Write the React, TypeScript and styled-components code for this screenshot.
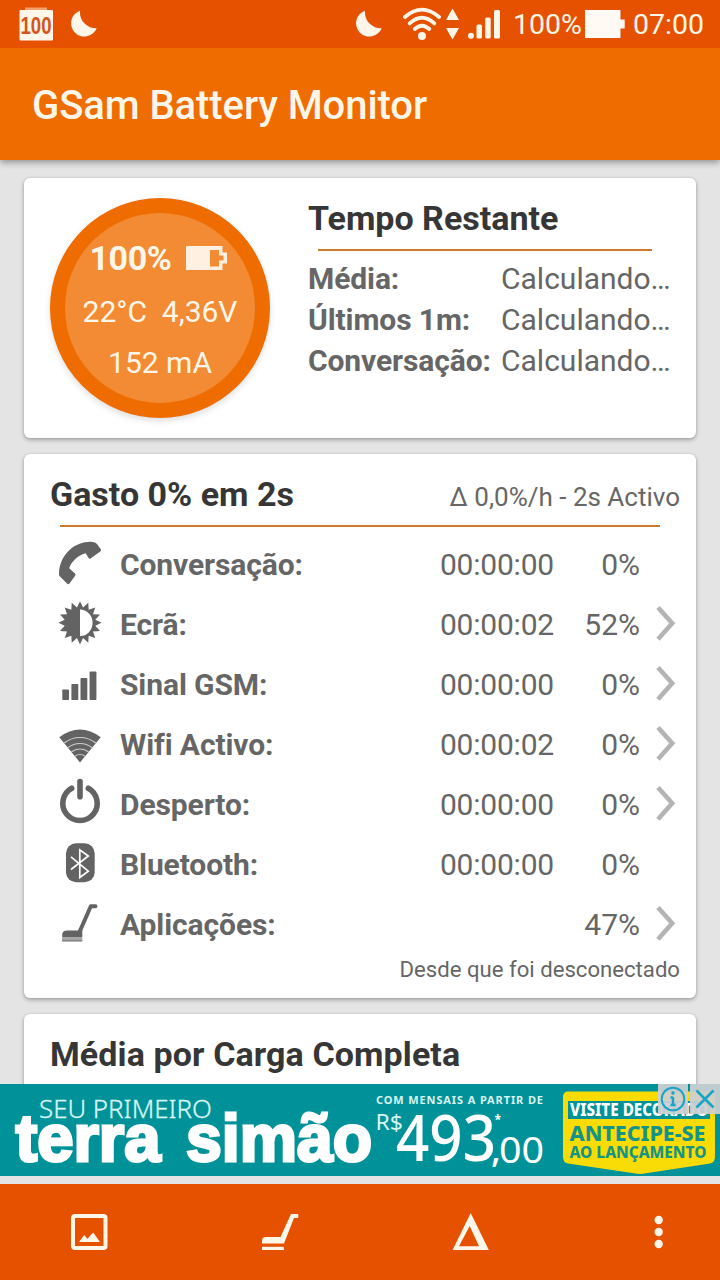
import React from 'react';
import styled, { createGlobalStyle } from 'styled-components';

const colors = {
  statusBar: '#e65100',
  appBar: '#ef6c00',
  page: '#e4e4e4',
  heading: '#363636',
  text: '#666666',
  icon: '#636363',
  rule: '#cc7a2c',
  ink: '#fff6ea',
  teal: '#009298',
  yellow: '#f9dc05',
};

const GlobalStyle = createGlobalStyle`
  * { box-sizing: border-box; }
  body { margin: 0; }
  svg { display: block; flex: none; }
`;

const Screen = styled.div`
  width: 720px;
  height: 1280px;
  display: flex;
  flex-direction: column;
  overflow: hidden;
  background: ${colors.page};
  font-family: Roboto, 'Noto Sans', sans-serif;
  color: ${colors.text};
`;

const StatusBar = styled.header`
  flex: none;
  height: 48px;
  padding: 0 16px 0 18px;
  display: flex;
  align-items: center;
  justify-content: space-between;
  background: ${colors.statusBar};
  color: ${colors.ink};
`;

const StatusGroup = styled.div`
  display: flex;
  align-items: center;
  height: 48px;
`;

const StatusText = styled.span<{ $left: number; $width: number }>`
  margin-left: ${(p) => p.$left}px;
  width: ${(p) => p.$width}px;
  font-size: 28.5px;
  line-height: 48px;
  padding-top: 2px;
  white-space: nowrap;
`;

const Gap = styled.span<{ $w: number }>`
  width: ${(p) => p.$w}px;
`;

const AppBar = styled.div`
  flex: none;
  height: 112px;
  padding: 4px 32px 0;
  display: flex;
  align-items: center;
  background: ${colors.appBar};
  box-shadow: 0 2px 7px rgba(0, 0, 0, 0.4);
  clip-path: inset(0 0 -12px 0);
  z-index: 1;
`;

const Title = styled.h1`
  margin: 0;
  font-size: 40px;
  font-weight: 500;
  line-height: 48px;
  letter-spacing: -0.08px;
  color: ${colors.ink};
`;

const Content = styled.main`
  flex: 1;
  min-height: 0;
  overflow: hidden;
  padding: 18px 24px 0;
  display: flex;
  flex-direction: column;
  gap: 16px;
`;

const Card = styled.section<{ $height: number }>`
  flex: none;
  height: ${(p) => p.$height}px;
  background: #fff;
  border-radius: 6px;
  box-shadow: 0 2px 4px rgba(0, 0, 0, 0.28), 0 0 2px rgba(0, 0, 0, 0.16);
`;

const SummaryCard = styled(Card)`
  display: flex;
  align-items: flex-start;
  padding: 20px 24px 0 26px;
`;

const Gauge = styled.div`
  flex: none;
  width: 220px;
  height: 220px;
  border-radius: 50%;
  border: 15px solid ${colors.appBar};
  background: #f28b33;
  color: ${colors.ink};
  box-shadow: 0 3px 6px rgba(0, 0, 0, 0.13);
  padding-top: 19px;
  display: flex;
  flex-direction: column;
  align-items: center;
`;

const GaugeLine = styled.div<{ $h: number }>`
  height: ${(p) => p.$h}px;
  line-height: ${(p) => p.$h}px;
  font-size: 30px;
  white-space: pre;
  display: flex;
  align-items: center;
`;

const GaugePercent = styled.strong`
  font-size: 34px;
  letter-spacing: -0.4px;
  margin: 0 14px 0 -4px;
`;

const Remaining = styled.div`
  margin-left: 38px;
  width: 364px;
`;

const Heading = styled.h2`
  margin: 0;
  font-size: 34px;
  font-weight: 700;
  line-height: 40px;
  color: ${colors.heading};
  white-space: nowrap;
`;

const Rule = styled.hr<{ $width: number; $top?: number }>`
  margin: ${(p) => p.$top ?? 0}px 0 0 10px;
  border: 0;
  height: 2px;
  width: ${(p) => p.$width}px;
  background: ${colors.rule};
`;

const Estimates = styled.dl`
  margin: 8px 0 0;
  display: grid;
  grid-template-columns: 193px 1fr;
  grid-auto-rows: 40.75px;
  line-height: 40.75px;
  font-size: 30px;
  white-space: nowrap;
`;

const EstimateLabel = styled.dt`
  font-weight: 700;
  letter-spacing: -0.1px;
`;

const EstimateValue = styled.dd`
  margin: 0;
`;

const UsageCard = styled(Card)`
  padding: 20px 16px 0 26px;
`;

const UsageHeader = styled.div`
  display: flex;
  justify-content: space-between;
  align-items: baseline;
  height: 51px;
`;

const UsageNote = styled.span`
  font-size: 26px;
  white-space: nowrap;
`;

const UsageList = styled.div`
  padding-top: 7px;
`;

const UsageRow = styled.div`
  display: grid;
  grid-template-columns: 70px 264px 170px 86px 40px;
  grid-template-rows: 60px;
  align-items: center;
  line-height: 58px;
  font-size: 30px;
  white-space: nowrap;
`;

const UsageLabel = styled.span`
  font-weight: 700;
  letter-spacing: -0.1px;
  padding-top: 2px;
`;

const UsageTime = styled.span`
  text-align: right;
  letter-spacing: -0.2px;
  padding-top: 2px;
`;

const UsagePercent = styled.span`
  text-align: right;
  padding-top: 2px;
`;

const Footnote = styled.p`
  margin: 0;
  font-size: 22.15px;
  line-height: 30px;
  text-align: right;
`;

const AverageCard = styled(Card)`
  padding: 20px 26px 0;
`;

const AverageHeading = styled(Heading)`
  letter-spacing: 0.1px;
`;

const AdSlot = styled.aside`
  flex: none;
  position: relative;
  height: 100px;
`;

const AdControls = styled.div`
  position: absolute;
  top: 0;
  right: 0;
  display: flex;
  gap: 2px;
`;

const AdButton = styled.span`
  width: 30px;
  height: 30px;
  display: flex;
  align-items: center;
  justify-content: center;
  background: rgba(204, 208, 211, 0.93);
`;

const BottomBar = styled.nav`
  flex: none;
  height: 96px;
  padding: 0 41px 0 65px;
  display: flex;
  align-items: center;
  justify-content: space-between;
  background: ${colors.statusBar};
`;

const BatteryLevelBadge = () => (
  <svg width="36" height="36" viewBox="18 6 36 36">
    <rect x="25" y="7.5" width="22" height="4" fill="#f3a071" />
    <rect x="19.5" y="10" width="33.5" height="30.5" rx="1" fill={colors.ink} />
    <text
      x="20.5"
      y="33.5"
      fontFamily="Liberation Sans"
      fontSize="24"
      fontWeight="700"
      textLength="31"
      lengthAdjust="spacingAndGlyphs"
      fill="#d4551c"
    >
      100
    </text>
  </svg>
);

const Moon = () => (
  <svg width="28" height="28" viewBox="0 0 28 28">
    <path d="M10 .7 A13.3 13.3 0 1 0 26.7 18.3 A16 16 0 0 1 10 .7Z" fill={colors.ink} />
  </svg>
);

const StatusWifi = () => (
  <svg width="38" height="34" viewBox="403 7 38 34">
    <g fill="none" stroke={colors.ink} strokeWidth="3.8" strokeLinecap="round">
      <path d="M404.9 17 Q422 2.3 439.1 17" />
      <path d="M409.7 23.4 Q422 12.2 434.3 23.4" />
      <path d="M414.7 29 Q422 22.5 429.3 29" />
    </g>
    <circle cx="422" cy="36" r="4" fill={colors.ink} />
  </svg>
);

const DataArrows = () => (
  <svg width="13" height="32" viewBox="446.5 8 13 32">
    <path d="M453 8.5 L459.5 20 H446.5Z M446.5 28 H459.5 L453 39.5Z" fill={colors.ink} />
  </svg>
);

const StatusSignal = () => (
  <svg width="32" height="30" viewBox="468 9 32 30" fill={colors.ink}>
    <circle cx="471" cy="35.7" r="3" />
    <rect x="476.5" y="24.5" width="5.5" height="14" rx="1.5" />
    <rect x="485.2" y="17.5" width="5.5" height="21" rx="1.5" />
    <rect x="494" y="10" width="6" height="28.5" rx="1.5" />
  </svg>
);

const StatusBattery = () => (
  <svg width="40" height="28" viewBox="585 10 40 28">
    <path d="M585 10 H620.5 V19.5 H624.7 V28.5 H620.5 V38 H585Z" fill="#fffaf4" />
  </svg>
);

const GaugeBattery = () => (
  <svg width="41" height="26" viewBox="0 0 41 26">
    <path
      fillRule="evenodd"
      d="M0 0 H36.5 V6.5 H41 V17.5 H36.5 V24 H0Z M24 4 H33 V9.5 H37.5 V14.5 H33 V20.5 H24Z"
      fill="#fff0e2"
    />
  </svg>
);

const RowIcon = ({ children }: { children: React.ReactNode }) => (
  <svg width="60" height="60" viewBox="0 0 60 60" fill={colors.icon}>
    {children}
  </svg>
);

const PhoneIcon = () => (
  <RowIcon>
    <path d="M9 39 C9.5 24 21 9 38 8 C42 7.5 45 8 47 10 L50.8 15.3 Q51.5 16.8 50.3 17.6 L40.5 24.5 Q39.4 25.2 38.6 24 L35.7 19.2 C29 20.5 21 27.5 19.2 34.3 L25 39.5 Q26 40.5 25.3 41.5 L19.5 49.5 Q18.3 50.8 17 49.6 L9.5 42 Q8.6 41 9 39Z" />
  </RowIcon>
);

const sunPoints = Array.from({ length: 32 }, (_, i) => {
  const radius = i % 2 === 0 ? 21.6 : 15.6;
  const angle = (i * Math.PI) / 16;
  return `${(30 + radius * Math.sin(angle)).toFixed(2)},${(28.8 - radius * Math.cos(angle)).toFixed(2)}`;
}).join(' ');

const BrightnessIcon = () => (
  <RowIcon>
    <polygon points={sunPoints} />
    <path d="M30 15.6 A12.6 13.2 0 0 1 30 42Z" fill="#fff" />
  </RowIcon>
);

const SignalIcon = () => (
  <RowIcon>
    <rect x="12.3" y="35.5" width="6.7" height="10.5" rx=".8" />
    <rect x="21.4" y="30" width="6.9" height="16" rx=".8" />
    <rect x="30.5" y="24" width="6.8" height="22" rx=".8" />
    <rect x="39.6" y="17.5" width="6.8" height="28.5" rx=".8" />
  </RowIcon>
);

const fanRings = [25.5, 19.5, 14, 8.5];

const WifiIcon = () => (
  <RowIcon>
    <path d="M9.3 23.2 Q30 7.8 50.7 23.2 L30 48.6Z" />
    <g fill="none" stroke="#cfcfcf" strokeWidth="1.1">
      {fanRings.map((r) => (
        <path
          key={r}
          d={`M${30 - r * 0.62} ${49 - r * 0.785} A${r} ${r} 0 0 1 ${30 + r * 0.62} ${49 - r * 0.785}`}
        />
      ))}
    </g>
  </RowIcon>
);

const PowerIcon = () => (
  <RowIcon>
    <g fill="none" stroke={colors.icon} strokeWidth="5.6" strokeLinecap="round">
      <path d="M21.7 14.3 A17.2 17.2 0 1 0 38.3 14.3" />
      <path d="M30 7.6 V22.7" />
    </g>
  </RowIcon>
);

const BluetoothIcon = () => (
  <RowIcon>
    <rect x="16" y="9.3" width="28.7" height="39" rx="10" />
    <path
      d="M21 22.8 L38.3 37.2 L29.8 43.5 V15.8 L38.3 22 L21 35.5"
      fill="none"
      stroke="#fff"
      strokeWidth="1.7"
    />
  </RowIcon>
);

const SweeperIcon = () => (
  <RowIcon>
    <path d="M45.5 12.3 H40.8 L29.5 38" fill="none" stroke={colors.icon} strokeWidth="4" strokeLinecap="round" strokeLinejoin="round" />
    <path d="M12.2 43 V40 Q13 36.6 17 36.6 H32.3 V43Z" />
    <rect x="12" y="43" width="20.3" height="4.4" rx="1" fill="#a6a6a6" />
    <path d="M12 46.8 H32.3" stroke="#777" strokeWidth="1" />
  </RowIcon>
);

const Chevron = () => (
  <svg width="40" height="60" viewBox="0 0 40 60">
    <path d="M18 13.5 L32.2 29.3 L18 45.2" fill="none" stroke="#b4b4b4" strokeWidth="4.6" />
  </svg>
);

const PictureNavIcon = () => (
  <svg width="48" height="48" viewBox="65 1208 48 48">
    <rect x="73" y="1216" width="32.5" height="32" rx="2" fill="none" stroke={colors.ink} strokeWidth="4" />
    <path d="M79 1242 L84.2 1235 L87.5 1238.8 L93.2 1232.4 L100 1242Z" fill={colors.ink} />
  </svg>
);

const SweeperNavIcon = () => (
  <svg width="48" height="48" viewBox="256 1208 48 48" fill={colors.ink}>
    <path d="M291 1214 H298.3 V1218 H294 L284 1243.5 H262 V1240 Q262.5 1237 266 1237 H280.5Z" />
    <rect x="262" y="1246.8" width="22" height="3.2" />
  </svg>
);

const DeltaNavIcon = () => (
  <svg width="48" height="48" viewBox="447 1208 48 48">
    <path
      fillRule="evenodd"
      d="M470.7 1213 L488.8 1250 H452.6Z M469.7 1226 L459 1246.2 H479Z"
      fill={colors.ink}
    />
  </svg>
);

const MoreNavIcon = () => (
  <svg width="41" height="48" viewBox="638 1208 41 48" fill={colors.ink}>
    <circle cx="658.7" cy="1220" r="4.2" />
    <circle cx="658.7" cy="1232" r="4.2" />
    <circle cx="658.7" cy="1244" r="4.2" />
  </svg>
);

const AdArtwork = () => (
  <svg width="720" height="92" viewBox="0 0 720 92" fontFamily="'Noto Sans', 'Open Sans', sans-serif" fill="#fff">
    <rect width="720" height="92" fill={colors.teal} />
    <text x="39" y="33.5" fontSize="25" fontWeight="300" textLength="173" lengthAdjust="spacingAndGlyphs" fill="#d8f6f5" stroke="#d8f6f5" strokeWidth=".3">SEU PRIMEIRO</text>
    <g fontFamily="'Liberation Sans', sans-serif" fontSize="66" fontWeight="700" stroke="#fff" strokeWidth="3">
      <text x="15.5" y="76.5" textLength="145" lengthAdjust="spacingAndGlyphs">terra</text>
      <text x="186" y="76.5" textLength="186" lengthAdjust="spacingAndGlyphs">simão</text>
    </g>
    <text x="376" y="20" fontSize="11" fontWeight="700" textLength="167" fill="#d8f4f3">COM MENSAIS A PARTIR DE</text>
    <text x="375.5" y="46" fontSize="22" textLength="27.5" lengthAdjust="spacingAndGlyphs" fill="#d8f4f3">R$</text>
    <text x="396" y="76.5" fontSize="64" fontWeight="500" textLength="100" lengthAdjust="spacingAndGlyphs">493</text>
    <text x="491" y="78" fontSize="36" fontWeight="500">,</text>
    <text x="499" y="78.5" fontSize="36" textLength="45" lengthAdjust="spacingAndGlyphs">00</text>
    <text x="494.5" y="40" fontSize="12" fontWeight="700">*</text>
    <path d="M568 7.5 H710 Q715 7.5 715 13 V73 Q715 78.5 710 79.5 L646 89.3 Q640 90.5 634 89.3 L568 79.5 Q563 78.5 563 73 V13 Q563 7.5 568 7.5Z" fill={colors.yellow} />
    <rect x="568" y="17" width="142" height="18" fill={colors.teal} />
    <g fontWeight="800">
      <text x="570" y="32" fontSize="17" textLength="138" lengthAdjust="spacingAndGlyphs">VISITE DECORADO</text>
      <text x="569.5" y="56.5" fontSize="22" textLength="136" lengthAdjust="spacingAndGlyphs" fill="#149488">ANTECIPE-SE</text>
      <text x="569.5" y="73.5" fontSize="16.5" textLength="137" lengthAdjust="spacingAndGlyphs" fill="#149488">AO LANÇAMENTO</text>
    </g>
  </svg>
);

const AdInfo = () => (
  <svg width="26" height="26" viewBox="0 0 26 26" fill="none" stroke="#1ba3c6">
    <circle cx="13" cy="13" r="11.3" strokeWidth="2" />
    <path d="M13 11 V19 M10.5 11.5 H13 M10.5 19 H15.5" strokeWidth="2.4" />
    <circle cx="13" cy="7" r="1.8" fill="#1ba3c6" stroke="none" />
  </svg>
);

const AdClose = () => (
  <svg width="22" height="22" viewBox="0 0 22 22" fill="none" stroke="#1ba3c6" strokeWidth="2.6">
    <path d="M2.5 2.5 L19.5 19.5 M19.5 2.5 L2.5 19.5" />
  </svg>
);

const estimates = ['Média:', 'Últimos 1m:', 'Conversação:'];

const usage = [
  { Icon: PhoneIcon, label: 'Conversação:', time: '00:00:00', percent: '0%', link: false },
  { Icon: BrightnessIcon, label: 'Ecrã:', time: '00:00:02', percent: '52%', link: true },
  { Icon: SignalIcon, label: 'Sinal GSM:', time: '00:00:00', percent: '0%', link: true },
  { Icon: WifiIcon, label: 'Wifi Activo:', time: '00:00:02', percent: '0%', link: true },
  { Icon: PowerIcon, label: 'Desperto:', time: '00:00:00', percent: '0%', link: true },
  { Icon: BluetoothIcon, label: 'Bluetooth:', time: '00:00:00', percent: '0%', link: false },
  { Icon: SweeperIcon, label: 'Aplicações:', time: '', percent: '47%', link: true },
];

export default function App() {
  return (
    <>
      <GlobalStyle />
      <Screen>
        <StatusBar>
          <StatusGroup>
            <BatteryLevelBadge />
            <Gap $w={16} />
            <Moon />
          </StatusGroup>
          <StatusGroup>
            <Moon />
            <Gap $w={20} />
            <StatusWifi />
            <Gap $w={5} />
            <DataArrows />
            <Gap $w={9} />
            <StatusSignal />
            <StatusText $left={13} $width={72}>100%</StatusText>
            <StatusBattery />
            <StatusText $left={8} $width={71}>07:00</StatusText>
          </StatusGroup>
        </StatusBar>
        <AppBar>
          <Title>GSam Battery Monitor</Title>
        </AppBar>
        <Content>
          <SummaryCard $height={260}>
            <Gauge>
              <GaugeLine $h={53}>
                <GaugePercent>100%</GaugePercent>
                <GaugeBattery />
              </GaugeLine>
              <GaugeLine $h={53}>{'22°C  4,36V'}</GaugeLine>
              <GaugeLine $h={49}>152 mA</GaugeLine>
            </Gauge>
            <Remaining>
              <Heading>Tempo Restante</Heading>
              <Rule $width={334} $top={11} />
              <Estimates>
                {estimates.map((label) => (
                  <React.Fragment key={label}>
                    <EstimateLabel>{label}</EstimateLabel>
                    <EstimateValue>Calculando…</EstimateValue>
                  </React.Fragment>
                ))}
              </Estimates>
            </Remaining>
          </SummaryCard>
          <UsageCard $height={544}>
            <UsageHeader>
              <Heading>Gasto 0% em 2s</Heading>
              <UsageNote>Δ 0,0%/h - 2s Activo</UsageNote>
            </UsageHeader>
            <Rule $width={600} />
            <UsageList>
              {usage.map(({ Icon, label, time, percent, link }) => (
                <UsageRow key={label}>
                  <Icon />
                  <UsageLabel>{label}</UsageLabel>
                  <UsageTime>{time}</UsageTime>
                  <UsagePercent>{percent}</UsagePercent>
                  {link && <Chevron />}
                </UsageRow>
              ))}
            </UsageList>
            <Footnote>Desde que foi desconectado</Footnote>
          </UsageCard>
          <AverageCard $height={300}>
            <AverageHeading>Média por Carga Completa</AverageHeading>
          </AverageCard>
        </Content>
        <AdSlot>
          <AdArtwork />
          <AdControls>
            <AdButton>
              <AdInfo />
            </AdButton>
            <AdButton>
              <AdClose />
            </AdButton>
          </AdControls>
        </AdSlot>
        <BottomBar>
          <PictureNavIcon />
          <SweeperNavIcon />
          <DeltaNavIcon />
          <MoreNavIcon />
        </BottomBar>
      </Screen>
    </>
  );
}
